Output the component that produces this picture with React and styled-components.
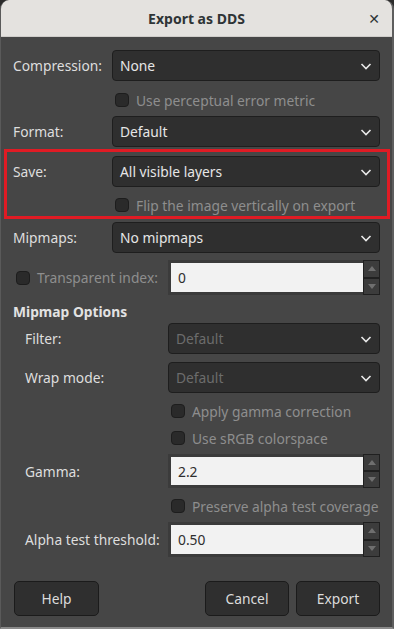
import React from "react";
import styled, { createGlobalStyle } from "styled-components";

const GlobalStyle = createGlobalStyle`
  html, body {
    margin: 0;
    padding: 0;
    background: #2b2b2b;
    font-family: "Noto Sans", "DejaVu Sans", sans-serif;
  }
  * { box-sizing: border-box; }
`;

const Chevron = () => (
  <svg width="14" height="14" viewBox="0 0 14 14">
    <polyline points="2.5,5 7,9.5 11.5,5" fill="none" stroke="#e8e8e8" strokeWidth="1.6" />
  </svg>
);

const Combo = ({ value, disabled }) => (
  <ComboBox>
    <ComboText disabled={disabled}>{value}</ComboText>
    <Chevron />
  </ComboBox>
);

const Check = ({ children }) => (
  <CheckLabel>
    <CheckBox />
    {children}
  </CheckLabel>
);

const Spin = ({ value }) => (
  <SpinWrap>
    <SpinEntry>{value}</SpinEntry>
    <SpinButtons>
      <SpinBtn>
        <svg width="8" height="5" viewBox="0 0 8 5"><polygon points="0,5 8,5 4,0" fill="#6f6f6f" /></svg>
      </SpinBtn>
      <SpinBtn>
        <svg width="8" height="5" viewBox="0 0 8 5"><polygon points="0,0 8,0 4,5" fill="#6f6f6f" /></svg>
      </SpinBtn>
    </SpinButtons>
  </SpinWrap>
);

export default function App() {
  return (
    <>
      <GlobalStyle />
      <Window>
        <TitleBar>
          <Title>Export as DDS</Title>
          <Close>✕</Close>
        </TitleBar>
        <Body>
          <Row mt={13} h={31}>
            <Label w={99}>Compression:</Label>
            <Combo value="None" />
          </Row>
          <Row mt={10} h={18}>
            <Label w={99} />
            <Check>Use perceptual error metric</Check>
          </Row>
          <Row mt={7} h={31}>
            <Label w={99}>Format:</Label>
            <Combo value="Default" />
          </Row>
          <Highlight>
            <Row mt={0} h={31}>
              <Label w={99}>Save:</Label>
              <Combo value="All visible layers" />
            </Row>
            <Row mt={9} h={18}>
              <Label w={99} />
              <Check>Flip the image vertically on export</Check>
            </Row>
          </Highlight>
          <Row mt={3} h={31}>
            <Label w={99}>Mipmaps:</Label>
            <Combo value="No mipmaps" />
          </Row>
          <Row mt={7} h={35}>
            <Label w={155}>
              <InlineCheck>
                <CheckBox />
                <Dim>Transparent index:</Dim>
              </InlineCheck>
            </Label>
            <Spin value="0" />
          </Row>
          <Row mt={7} h={18}>
            <Section>Mipmap Options</Section>
          </Row>
          <Row mt={3} h={31}>
            <Label w={155} indent>Filter:</Label>
            <Combo value="Default" disabled />
          </Row>
          <Row mt={8} h={31}>
            <Label w={155} indent>Wrap mode:</Label>
            <Combo value="Default" disabled />
          </Row>
          <Row mt={9} h={18}>
            <Label w={155} />
            <Check>Apply gamma correction</Check>
          </Row>
          <Row mt={9} h={18}>
            <Label w={155} />
            <Check>Use sRGB colorspace</Check>
          </Row>
          <Row mt={7} h={34}>
            <Label w={155} indent>Gamma:</Label>
            <Spin value="2.2" />
          </Row>
          <Row mt={9} h={18}>
            <Label w={155} />
            <Check>Preserve alpha test coverage</Check>
          </Row>
          <Row mt={7} h={35}>
            <Label w={155} indent>Alpha test threshold:</Label>
            <Spin value="0.50" />
          </Row>
          <ButtonRow>
            <Button wide>Help</Button>
            <Spacer />
            <Button>Cancel</Button>
            <Button>Export</Button>
          </ButtonRow>
        </Body>
      </Window>
    </>
  );
}

const Window = styled.div`
  width: 394px;
  height: 629px;
  display: flex;
  flex-direction: column;
  background: #464646;
  border-radius: 9px 9px 0 0;
  overflow: hidden;
  border-left: 1px solid #5a5a5a;
  border-right: 2px solid #5e5e5e;
  border-bottom: 2px solid #8a8a8a;
`;

const TitleBar = styled.div`
  height: 37px;
  flex: none;
  background: #e4e2df;
  display: flex;
  align-items: center;
  justify-content: center;
  position: relative;
  border-bottom: 1px solid #cfcdca;
`;

const Title = styled.div`
  font-weight: 700;
  font-size: 14px;
  color: #2e3436;
`;

const Close = styled.div`
  position: absolute;
  right: 12px;
  top: 9px;
  font-size: 14px;
  font-weight: 900;
  color: #2e3436;
`;

const Body = styled.div`
  display: flex;
  flex-direction: column;
  padding: 0 12px 0 12px;
  color: #dcdcdc;
  font-size: 13.8px;
`;

const Row = styled.div`
  display: flex;
  align-items: center;
  height: ${({ h }) => h}px;
  margin-top: ${({ mt }) => mt}px;
  flex: none;
`;

const Label = styled.div`
  width: ${({ w }) => w}px;
  flex: none;
  padding-left: ${({ indent }) => (indent ? 12 : 0)}px;
  color: #dedede;
  white-space: nowrap;
`;

const ComboBox = styled.div`
  flex: 1;
  height: 100%;
  display: flex;
  align-items: center;
  justify-content: space-between;
  padding: 0 6px 0 7px;
  background: #2f2f2f;
  border: 1px solid #1e1e1e;
  border-radius: 4px;
`;

const ComboText = styled.span`
  color: ${({ disabled }) => (disabled ? "#6c6c6c" : "#e6e6e6")};
`;

const CheckLabel = styled.div`
  display: flex;
  align-items: center;
  gap: 7px;
  padding-left: 3px;
  color: #8e8e8e;
  white-space: nowrap;
`;

const InlineCheck = styled.div`
  display: flex;
  align-items: center;
  gap: 7px;
  padding-left: 3px;
`;

const Dim = styled.span`
  color: #8e8e8e;
`;

const CheckBox = styled.span`
  width: 14px;
  height: 14px;
  flex: none;
  background: #2a2a2a;
  border: 1px solid #1d1d1d;
  border-radius: 4px;
`;

const Highlight = styled.div`
  margin: 2px -10px 0 -9px;
  border: 3px solid #e01b24;
  padding: 4px 7px 2px 6px;
`;

const Section = styled.div`
  font-weight: 700;
  color: #e2e2e2;
`;

const SpinWrap = styled.div`
  flex: 1;
  height: 100%;
  display: flex;
  align-items: stretch;
  background: #3b3b3b;
  padding: 3px 0 3px 3px;
`;

const SpinEntry = styled.div`
  flex: 1;
  background: #f2f2f2;
  color: #2e2e2e;
  display: flex;
  align-items: center;
  padding-left: 7px;
`;

const SpinButtons = styled.div`
  width: 17px;
  display: flex;
  flex-direction: column;
  margin: -3px 0;
`;

const SpinBtn = styled.div`
  flex: 1;
  background: #3c3c3c;
  border: 1px solid #202020;
  display: flex;
  align-items: center;
  justify-content: center;
`;

const ButtonRow = styled.div`
  display: flex;
  gap: 7px;
  height: 35px;
  margin-top: 24px;
  padding-left: 1px;
`;

const Spacer = styled.div`
  flex: 1;
`;

const Button = styled.div`
  width: ${({ wide }) => (wide ? 85 : 84)}px;
  display: flex;
  align-items: center;
  justify-content: center;
  background: #2f2f2f;
  border: 1px solid #1b1b1b;
  border-radius: 5px;
  color: #dcdcdc;
`;
